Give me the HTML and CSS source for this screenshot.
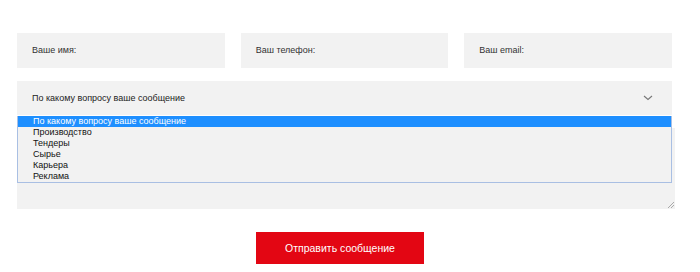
FILE: index.html
```html
<!DOCTYPE html>
<html>
  <head>
    <title>Обратная связь</title>
    <link rel="stylesheet" href="styles.css">
  </head>
  <body>
    <form class="feedback-form">
      <div class="feedback-row">
        <div class="feedback-field">Ваше имя:</div>
        <div class="feedback-field">Ваш телефон:</div>
        <div class="feedback-field">Ваш email:</div>
      </div>
      <div class="feedback-body">
        <div class="feedback-select">
          <span>По какому вопросу ваше сообщение</span>
          <svg class="feedback-chevron" width="10" height="6" viewBox="0 0 10 6">
            <path d="M1 1 L5 4.5 L9 1" fill="none" stroke="#777" stroke-width="1.1"/>
          </svg>
        </div>
        <div class="feedback-options">
          <div class="feedback-option selected">По какому вопросу ваше сообщение</div>
          <div class="feedback-option">Производство</div>
          <div class="feedback-option">Тендеры</div>
          <div class="feedback-option">Сырье</div>
          <div class="feedback-option">Карьера</div>
          <div class="feedback-option">Реклама</div>
        </div>
        <div class="feedback-text">
          <svg class="feedback-grip" width="6" height="6" viewBox="0 0 6 6">
            <path d="M6 0 L0 6 M6 3 L3 6" stroke="#aaa" stroke-width="1"/>
          </svg>
        </div>
      </div>
      <button type="button" class="feedback-send">Отправить сообщение</button>
    </form>
  </body>
</html>
```

FILE: styles.css
```css
body {
  margin: 0;
  font-family: "Liberation Sans", Arial, sans-serif;
  background-color: #fff;
  color: #333;
}
.feedback-form {
  width: 655px;
  padding: 33px 0 0 17px;
}
.feedback-row {
  display: grid;
  grid-template-columns: repeat(3, 1fr);
  gap: 16px;
}
.feedback-field {
  height: 35px;
  background-color: #f2f2f2;
  font-size: 9px;
  line-height: 35px;
  padding-left: 15px;
}
.feedback-body {
  position: relative;
  margin-top: 13px;
}
.feedback-select {
  height: 34px;
  background-color: #f2f2f2;
  display: flex;
  align-items: center;
  justify-content: space-between;
  padding: 0 19px 0 15px;
  font-size: 9px;
  color: #222;
}
.feedback-chevron {
  display: block;
}
.feedback-options {
  position: absolute;
  z-index: 1;
  top: 35px;
  left: 0;
  width: 653px;
  border: 1px solid #a9bfe3;
  border-top: none;
  background-color: #f2f2f2;
}
.feedback-option {
  height: 11px;
  line-height: 11px;
  font-size: 9px;
  padding-left: 15px;
  color: #111;
}
.feedback-option.selected {
  background-color: #1e8fff;
  color: #fff;
}
.feedback-text {
  position: relative;
  width: 658px;
  height: 81px;
  margin-top: 13px;
  background-color: #f2f2f2;
}
.feedback-grip {
  position: absolute;
  right: 1px;
  bottom: 1px;
}
.feedback-send {
  display: block;
  width: 168px;
  height: 32px;
  margin: 23px 0 0 239px;
  border: none;
  background-color: #e30613;
  color: #fff;
  font-family: "Liberation Sans", Arial, sans-serif;
  font-size: 10.5px;
}
```
